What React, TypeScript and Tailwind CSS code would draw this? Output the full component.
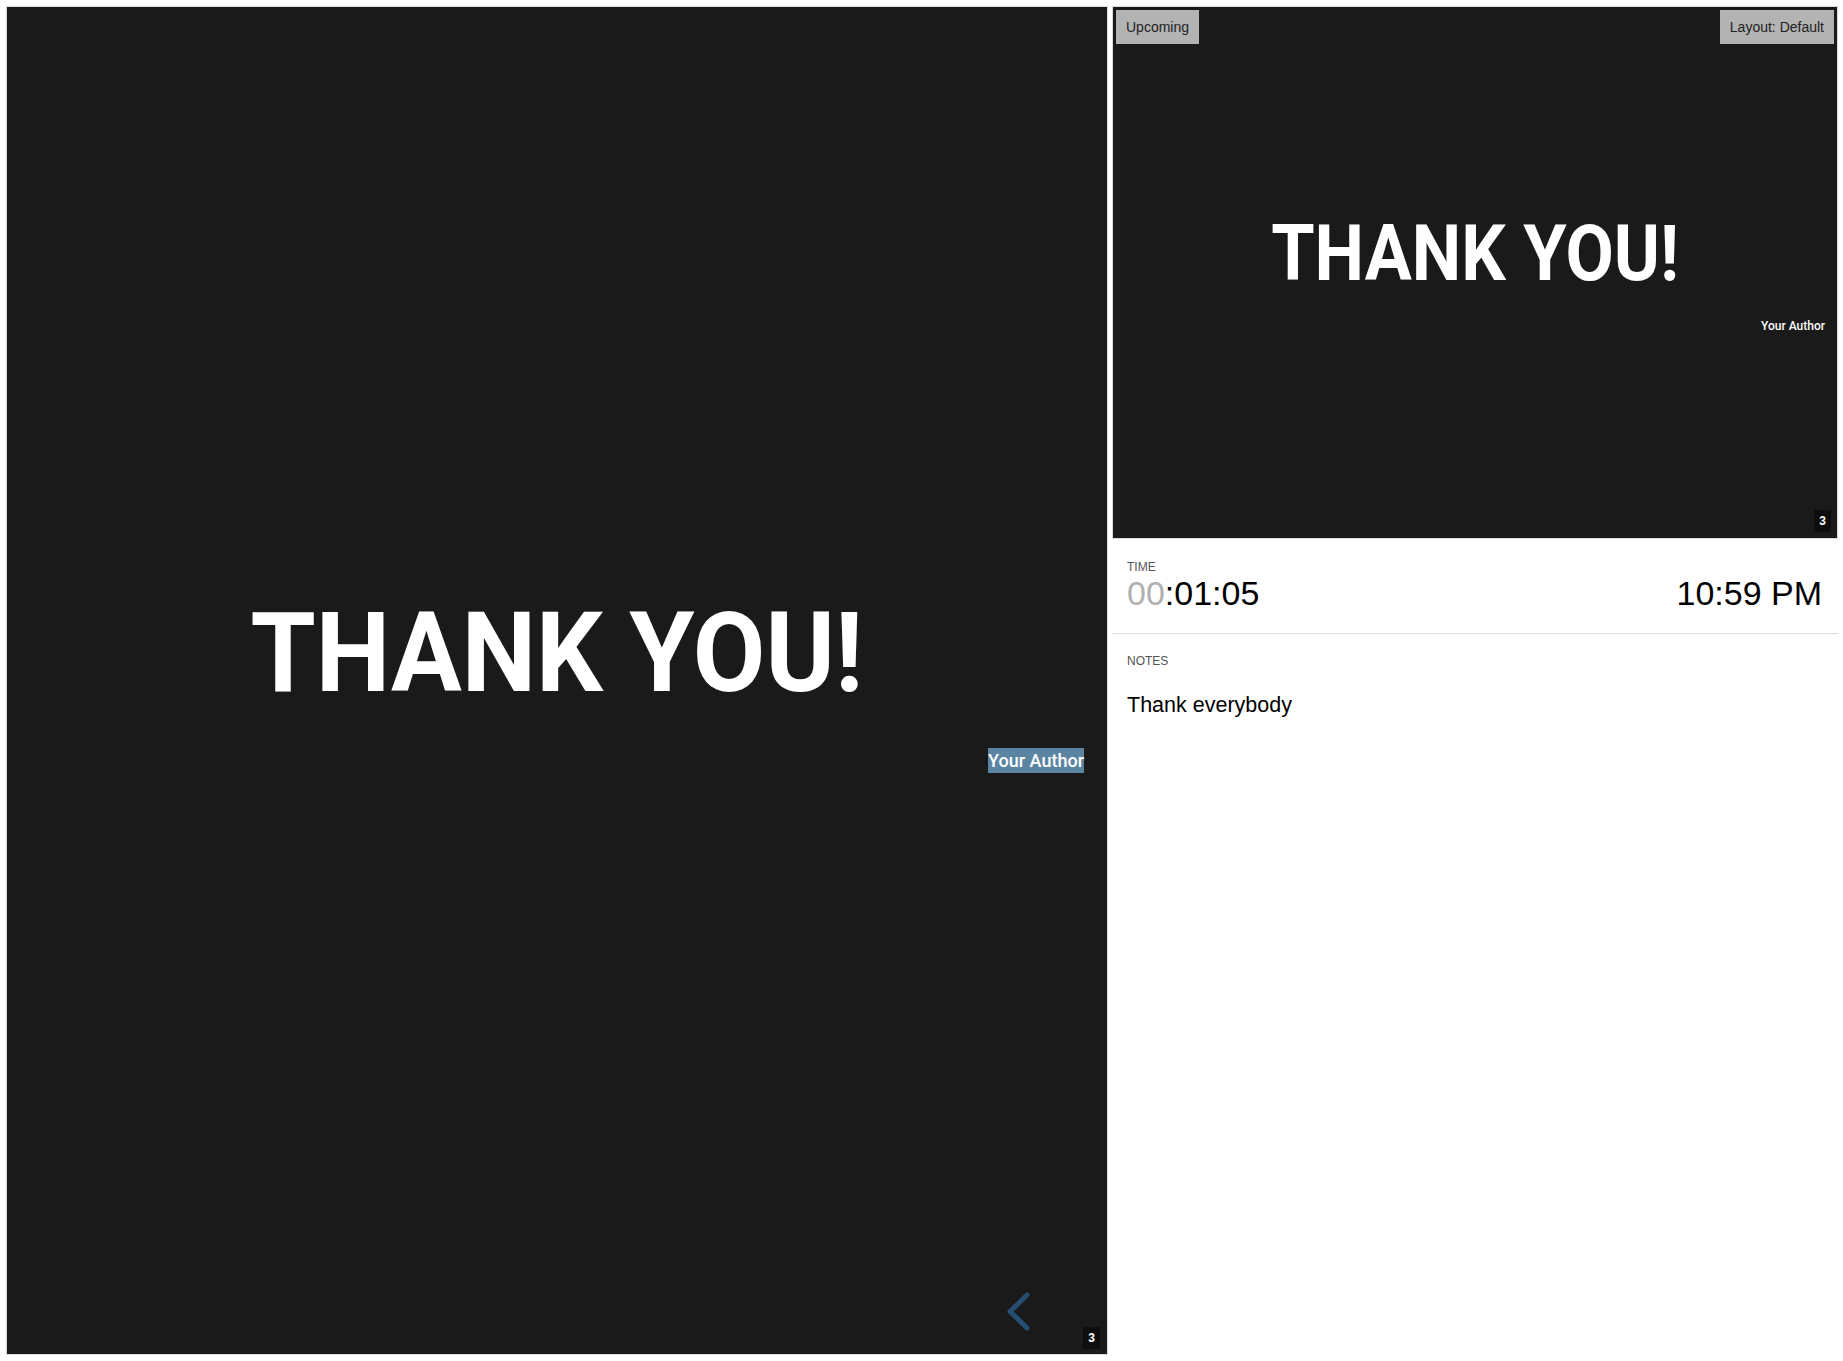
import React from "react";

const ui = { fontFamily: '"Liberation Sans", Arial, Helvetica, sans-serif' };
const slideFont = { fontFamily: 'Roboto, "Open Sans", sans-serif' };

function PageNum({ className }: { className: string }) {
  return (
    <div
      className={`absolute flex h-[22px] w-[17px] items-center justify-center bg-[#0e0e0e] text-[12px] font-bold text-white ${className}`}
      style={ui}
    >
      3
    </div>
  );
}

function CurrentSlide() {
  return (
    <div className="relative h-[1349px] w-[1102px] shrink-0 border border-[#dcdcdc] bg-[#1a1a1a]">
      <div className="flex h-full flex-col justify-center pt-[9px]" style={slideFont}>
        <div className="flex justify-center">
          <span className="inline-block origin-center scale-x-[0.94] text-[112px] font-bold leading-none text-white">
            THANK YOU!
          </span>
        </div>
        <div className="mt-[39px] flex justify-end pr-[23px]">
          <span className="bg-[#5b84a2] text-[18px] font-medium leading-[25px] text-white">Your Author</span>
        </div>
      </div>
      <svg className="absolute left-[996px] top-[1281px]" width="30" height="46" viewBox="0 0 30 46">
        <polyline
          points="24,7 7,23.5 24,40"
          fill="none"
          stroke="#264e70"
          strokeWidth="5"
          strokeLinecap="round"
          strokeLinejoin="round"
        />
      </svg>
      <PageNum className="bottom-[5px] right-[7px]" />
    </div>
  );
}

function UpcomingSlide() {
  return (
    <div className="relative h-[533px] w-full border border-[#dcdcdc] bg-[#1a1a1a]">
      <div className="flex h-full flex-col justify-center pt-[4px]" style={slideFont}>
        <div className="flex justify-center">
          <span className="inline-block origin-center scale-x-[0.91] text-[77px] font-bold leading-none text-white">
            THANK YOU!
          </span>
        </div>
        <div className="mt-[25px] flex justify-end pr-[12px]">
          <span className="text-[12px] font-medium leading-[16px] text-white">Your Author</span>
        </div>
      </div>
      <div
        className="absolute left-[3px] top-[3px] flex h-[34px] items-center bg-[#b3b3b3] px-[10px] text-[14px] text-[#222]"
        style={ui}
      >
        Upcoming
      </div>
      <div
        className="absolute right-[3px] top-[3px] flex h-[34px] items-center bg-[#b3b3b3] px-[10px] text-[14px] text-[#222]"
        style={ui}
      >
        Layout: Default
      </div>
      <PageNum className="bottom-[6px] right-[6px]" />
    </div>
  );
}

export default function App() {
  return (
    <div className="flex h-[1361px] w-[1843px] gap-[4px] bg-white pl-[6px] pt-[6px]" style={ui}>
      <CurrentSlide />
      <div className="flex w-[726px] flex-col">
        <UpcomingSlide />
        <div className="border-b border-[#dddddd] pb-[21px] pl-[15px] pr-[16px] pt-[22px]">
          <div className="text-[12px] leading-[13px] text-[#555]">TIME</div>
          <div className="flex items-baseline justify-between text-[34px] leading-[38px] text-black">
            <span>
              <span className="text-[#b0b0b0]">00</span>:01:05
            </span>
            <span>10:59 PM</span>
          </div>
        </div>
        <div className="pl-[15px] pt-[21px]">
          <div className="text-[12px] leading-[13px] text-[#555]">NOTES</div>
          <div className="mt-[23px] text-[21.5px] leading-[28px] text-black">Thank everybody</div>
        </div>
      </div>
    </div>
  );
}
